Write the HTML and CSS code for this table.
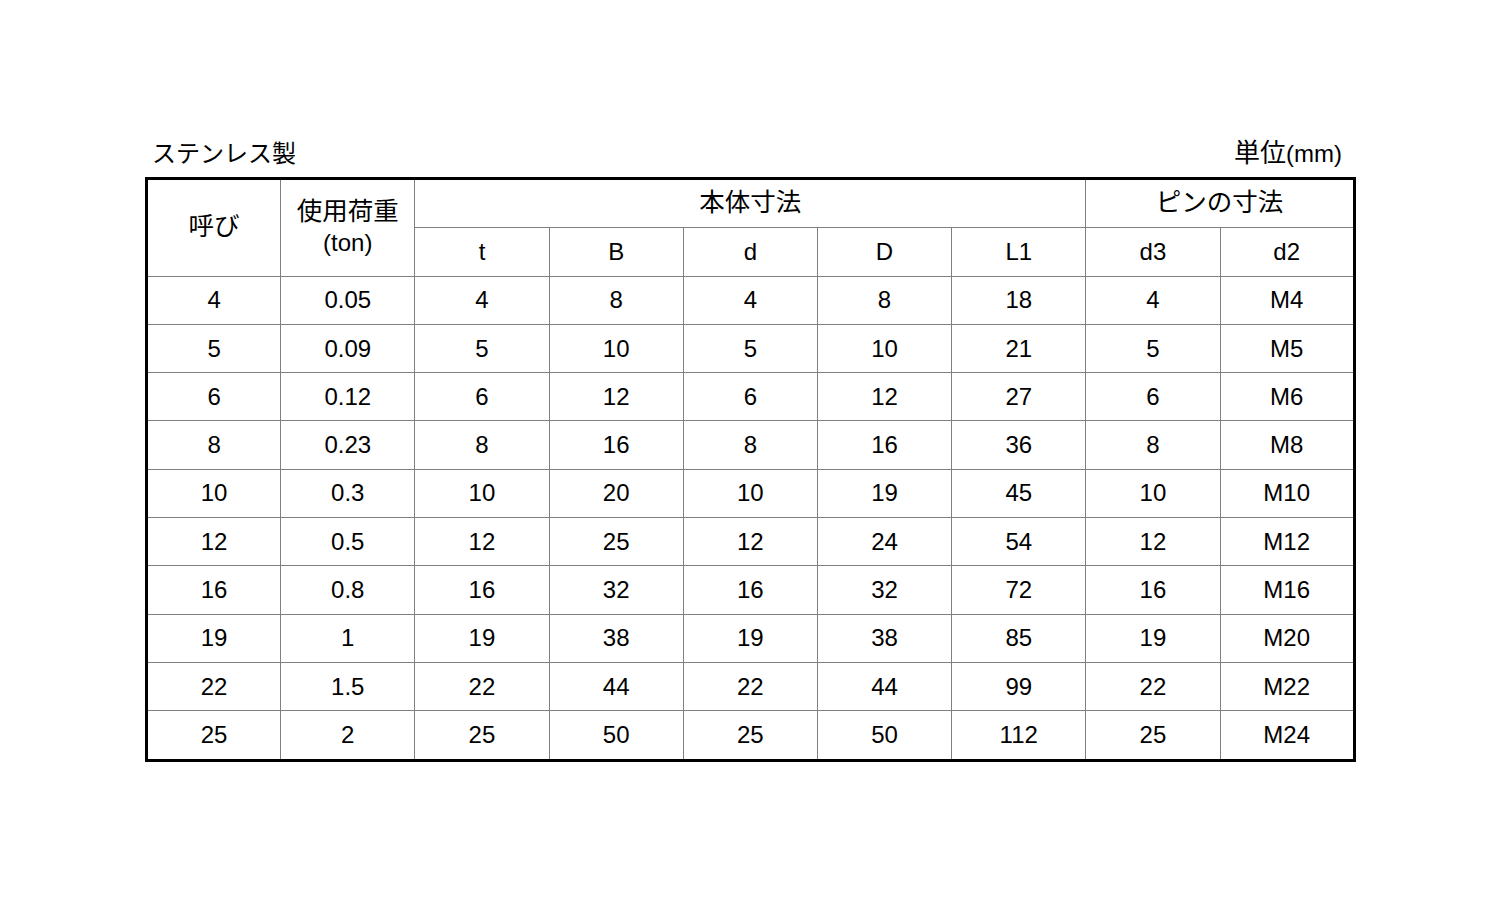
FILE: index.html
```html
<!DOCTYPE html>
<html lang="ja">
<head>
<meta charset="utf-8">
<link rel="stylesheet" href="styles.css">
</head>
<body>
<div class="sheet">
  <div class="caption">
    <span class="material">ステンレス製</span>
    <span class="unit"><span class="kanji">単位</span>(mm)</span>
  </div>
  <table class="spec">
    <colgroup>
      <col><col><col><col><col><col><col><col><col>
    </colgroup>
    <thead>
      <tr>
        <th rowspan="2" class="jp">呼び</th>
        <th rowspan="2" class="load"><span class="jp">使用荷重</span><br>(ton)</th>
        <th colspan="5" class="jp">本体寸法</th>
        <th colspan="2" class="jp">ピンの寸法</th>
      </tr>
      <tr>
        <th>t</th><th>B</th><th>d</th><th>D</th><th>L1</th><th>d3</th><th>d2</th>
      </tr>
    </thead>
    <tbody>
      <tr><td>4</td><td>0.05</td><td>4</td><td>8</td><td>4</td><td>8</td><td>18</td><td>4</td><td>M4</td></tr>
      <tr><td>5</td><td>0.09</td><td>5</td><td>10</td><td>5</td><td>10</td><td>21</td><td>5</td><td>M5</td></tr>
      <tr><td>6</td><td>0.12</td><td>6</td><td>12</td><td>6</td><td>12</td><td>27</td><td>6</td><td>M6</td></tr>
      <tr><td>8</td><td>0.23</td><td>8</td><td>16</td><td>8</td><td>16</td><td>36</td><td>8</td><td>M8</td></tr>
      <tr><td>10</td><td>0.3</td><td>10</td><td>20</td><td>10</td><td>19</td><td>45</td><td>10</td><td>M10</td></tr>
      <tr><td>12</td><td>0.5</td><td>12</td><td>25</td><td>12</td><td>24</td><td>54</td><td>12</td><td>M12</td></tr>
      <tr><td>16</td><td>0.8</td><td>16</td><td>32</td><td>16</td><td>32</td><td>72</td><td>16</td><td>M16</td></tr>
      <tr><td>19</td><td>1</td><td>19</td><td>38</td><td>19</td><td>38</td><td>85</td><td>19</td><td>M20</td></tr>
      <tr><td>22</td><td>1.5</td><td>22</td><td>44</td><td>22</td><td>44</td><td>99</td><td>22</td><td>M22</td></tr>
      <tr><td>25</td><td>2</td><td>25</td><td>50</td><td>25</td><td>50</td><td>112</td><td>25</td><td>M24</td></tr>
    </tbody>
  </table>
</div>
</body>
</html>
```

FILE: styles.css
```css
html, body {
  margin: 0;
  padding: 0;
  background: #ffffff;
}

body {
  font-family: "Liberation Sans", Arial, "Noto Sans CJK JP", sans-serif;
  color: #000;
}

.sheet {
  width: 1210px;
  margin-left: 145px;
  padding-top: 138px;
}

.caption {
  display: flex;
  justify-content: space-between;
  align-items: flex-end;
  font-size: 24px;
  line-height: 32px;
  height: 32px;
  padding: 0 13px 7px 7px;
}

.caption .kanji {
  font-size: 26px;
}

.spec {
  width: 1208px;
  table-layout: fixed;
  border-collapse: collapse;
  border: 3px solid #000;
  font-size: 24px;
}

.spec col {
  width: 134.2px;
}

.spec th,
.spec td {
  border: 1px solid #808080;
  height: 47.3px;
  padding: 0;
  text-align: center;
  vertical-align: middle;
  font-weight: normal;
  line-height: 28px;
}

.spec .jp {
  font-size: 25.5px;
}

.spec th.jp {
  padding-bottom: 3px;
  height: 44.3px;
}

.spec th.load {
  line-height: 31px;
  padding-bottom: 1px;
}
```
